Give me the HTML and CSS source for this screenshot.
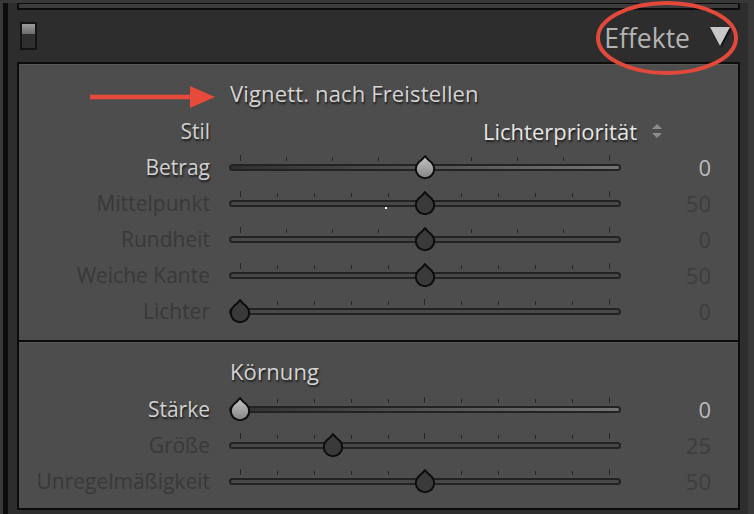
FILE: index.html
```html
<!DOCTYPE html>
<html lang="de">
<head>
	<meta charset="UTF-8">
	<title>Effekte</title>
	<link rel="stylesheet" href="styles.css">
</head>
<body>
	<svg class="defs" width="0" height="0">
		<defs>
			<linearGradient id="knob-light" x1="0" y1="0" x2="0" y2="1">
				<stop offset="0" stop-color="#c4c4c4"/>
				<stop offset="1" stop-color="#858585"/>
			</linearGradient>
			<path id="knob" d="M11 1.2 Q13.5 4.5 17.5 7.5 A9.2 9.2 0 1 1 4.5 7.5 Q8.5 4.5 11 1.2 Z"/>
		</defs>
	</svg>
	<div class="dock">
		<div class="stub"></div>
		<div class="header">
			<span class="toggle"><span class="toggle-knob"></span></span>
			<span class="header-title">Effekte</span>
			<svg class="header-arrow" viewBox="0 0 22 22"><polygon points="1,2 21,2 11,21"/></svg>
		</div>
		<div class="panel">
			<div class="section">
				<div class="row"><span class="section-title">Vignett. nach Freistellen</span></div>
				<div class="row">
					<span class="label on">Stil</span>
					<div class="select">Lichterpriorität
						<svg viewBox="0 0 10 14"><polygon points="5,0 10,5 0,5"/><polygon points="0,9 10,9 5,14"/></svg>
					</div>
				</div>
				<div class="row">
					<span class="label on">Betrag</span>
					<div class="slider on" style="--v:.5">
						<div class="ticks"><i class="big"></i><i></i><i></i><i></i><i class="big"></i><i></i><i></i><i></i><i class="big"></i></div>
						<div class="track"></div>
						<svg class="thumb" viewBox="0 0 22 25"><use href="#knob"/></svg>
					</div>
					<span class="value on">0</span>
				</div>
				<div class="row">
					<span class="label">Mittelpunkt</span>
					<div class="slider" style="--v:.5">
						<div class="ticks"><i class="big"></i><i></i><i></i><i></i><i></i><i class="big"></i><i></i><i></i><i></i><i></i><i class="big"></i></div>
						<div class="track"></div>
						<span class="cursor-dot"></span>
						<svg class="thumb" viewBox="0 0 22 25"><use href="#knob"/></svg>
					</div>
					<span class="value">50</span>
				</div>
				<div class="row">
					<span class="label">Rundheit</span>
					<div class="slider" style="--v:.5">
						<div class="ticks"><i class="big"></i><i></i><i></i><i></i><i class="big"></i><i></i><i></i><i></i><i class="big"></i></div>
						<div class="track"></div>
						<svg class="thumb" viewBox="0 0 22 25"><use href="#knob"/></svg>
					</div>
					<span class="value">0</span>
				</div>
				<div class="row">
					<span class="label">Weiche Kante</span>
					<div class="slider" style="--v:.5">
						<div class="ticks"><i class="big"></i><i></i><i></i><i></i><i></i><i class="big"></i><i></i><i></i><i></i><i></i><i class="big"></i></div>
						<div class="track"></div>
						<svg class="thumb" viewBox="0 0 22 25"><use href="#knob"/></svg>
					</div>
					<span class="value">50</span>
				</div>
				<div class="row">
					<span class="label">Lichter</span>
					<div class="slider" style="--v:0">
						<div class="ticks"><i class="big"></i><i></i><i></i><i></i><i></i><i class="big"></i><i></i><i></i><i></i><i></i><i class="big"></i></div>
						<div class="track"></div>
						<svg class="thumb" viewBox="0 0 22 25"><use href="#knob"/></svg>
					</div>
					<span class="value">0</span>
				</div>
			</div>
			<div class="section">
				<div class="row"><span class="section-title">Körnung</span></div>
				<div class="row">
					<span class="label on">Stärke</span>
					<div class="slider on" style="--v:0">
						<div class="ticks"><i class="big"></i><i></i><i></i><i></i><i></i><i class="big"></i><i></i><i></i><i></i><i></i><i class="big"></i></div>
						<div class="track"></div>
						<svg class="thumb" viewBox="0 0 22 25"><use href="#knob"/></svg>
					</div>
					<span class="value on">0</span>
				</div>
				<div class="row">
					<span class="label">Größe</span>
					<div class="slider" style="--v:.25">
						<div class="ticks"><i class="big"></i><i></i><i></i><i></i><i></i><i class="big"></i><i></i><i></i><i></i><i></i><i class="big"></i></div>
						<div class="track"></div>
						<svg class="thumb" viewBox="0 0 22 25"><use href="#knob"/></svg>
					</div>
					<span class="value">25</span>
				</div>
				<div class="row">
					<span class="label">Unregelmäßigkeit</span>
					<div class="slider" style="--v:.5">
						<div class="ticks"><i class="big"></i><i></i><i></i><i></i><i></i><i class="big"></i><i></i><i></i><i></i><i></i><i class="big"></i></div>
						<div class="track"></div>
						<svg class="thumb" viewBox="0 0 22 25"><use href="#knob"/></svg>
					</div>
					<span class="value">50</span>
				</div>
			</div>
		</div>
	</div>
	<!-- rote Markierungen -->
	<svg class="mark-ellipse" viewBox="0 0 145 78"><ellipse cx="72" cy="38" rx="69" ry="35"/></svg>
	<svg class="mark-arrow" viewBox="0 0 130 26"><line x1="2" y1="13" x2="106" y2="13"/><polygon points="102,2 127,13 102,24"/></svg>
</body>
</html>
```

FILE: styles.css
```css
/* reset */
	* {
		margin: 0;
		padding: 0;
		box-sizing: border-box;
	}
	body {
		position: relative;
		width: 754px;
		height: 514px;
		overflow: hidden;
		font-family: "Open Sans", "Noto Sans", sans-serif;
		background: #383838;
	}
	.defs {
		position: absolute;
	}
	.dock {
		width: 745px;
		height: 514px;
		margin-left: 3px;
		padding: 0 8px 0 9px;
		border-left: 5px solid #0c0c0c;
		background: #2d2d2d;
	}
	.stub {
		height: 7px;
		margin-top: 3px;
		border: 2px solid #0c0c0c;
		border-top-width: 1px;
		background: #3c3c3c;
	}
	.header {
		display: flex;
		align-items: center;
		height: 52px;
		padding: 0 9px 0 3px;
	}
	.toggle {
		display: flex;
		flex-direction: column;
		width: 17px;
		height: 28px;
		border: 2px solid #141414;
		background: #2f2f2f;
	}
	.toggle-knob {
		height: 10px;
		background: linear-gradient(#9c9c9c, #6a6a6a);
	}
	.header-title {
		margin-left: auto;
		padding-top: 4px;
		font-size: 26.5px;
		color: #b3b3b3;
	}
	.header-arrow {
		width: 22px;
		height: 22px;
		margin-left: 19px;
		fill: #c8c8c8;
		filter: drop-shadow(1px 1px 1px #000);
	}
	.panel {
		height: 448px;
		border: 2px solid #0c0c0c;
		background: #4d4d4d;
	}
	.section {
		padding: 13px 0 11px;
		box-shadow: inset 0 1px 0 #585858;
	}
	.section + .section {
		padding-bottom: 9px;
		border-top: 2px solid #0c0c0c;
	}
	.row {
		display: flex;
		align-items: center;
		height: 36px;
	}
	.section-title {
		margin: 0 0 4px 211px;
		font-size: 22px;
		letter-spacing: .15px;
		color: #d4d4d4;
		text-shadow: 1px 2px 2px rgba(0, 0, 0, .65);
	}
	.label {
		width: 191px;
		margin-right: 19px;
		text-align: right;
		font-size: 21px;
		color: #393939;
	}
	.label.on {
		color: #d0d0d0;
		text-shadow: 1px 2px 2px rgba(0, 0, 0, .65);
	}
	.select {
		flex: 1;
		display: flex;
		justify-content: flex-end;
		align-items: center;
		padding-right: 76px;
		font-size: 22px;
		color: #e6e6e6;
		text-shadow: 1px 2px 2px rgba(0, 0, 0, .65);
	}
	.select svg {
		width: 10px;
		height: 14px;
		margin-left: 15px;
		fill: #8c8c8c;
	}
	.slider {
		position: relative;
		width: 392px;
		height: 36px;
	}
	.ticks {
		display: flex;
		justify-content: space-between;
		align-items: flex-end;
		height: 6px;
		margin: 6px 11px 0;
	}
	.ticks i {
		width: 1px;
		height: 4px;
		background: #262626;
	}
	.ticks i.big {
		height: 6px;
	}
	.track {
		height: 7px;
		margin-top: 3px;
		border: 2px solid #232323;
		border-radius: 4px;
		background: #484848;
	}
	.slider.on .track {
		background: linear-gradient(to right, #303030, #747474);
	}
	.thumb {
		position: absolute;
		top: 6px;
		left: calc((100% - 22px) * var(--v));
		width: 22px;
		height: 25px;
		fill: #3a3a3a;
		stroke: #0d0d0d;
		stroke-width: 2;
		stroke-linejoin: round;
	}
	.slider.on .thumb {
		fill: url(#knob-light);
	}
	.cursor-dot {
		position: absolute;
		top: 22px;
		left: 156px;
		width: 2px;
		height: 2px;
		background: #fff;
	}
	.value {
		width: 90px;
		text-align: right;
		font-size: 22px;
		color: #3d3d3d;
	}
	.value.on {
		color: #bcbcbc;
	}
	.mark-ellipse {
		position: absolute;
		top: 0;
		left: 595px;
		width: 145px;
		height: 78px;
		fill: none;
		stroke: #e2493b;
		stroke-width: 4;
	}
	.mark-arrow {
		position: absolute;
		top: 84px;
		left: 88px;
		width: 130px;
		height: 26px;
		fill: #e54a3a;
		stroke: #e54a3a;
		stroke-width: 4.5;
	}
	.mark-arrow polygon {
		stroke: none;
	}
```
